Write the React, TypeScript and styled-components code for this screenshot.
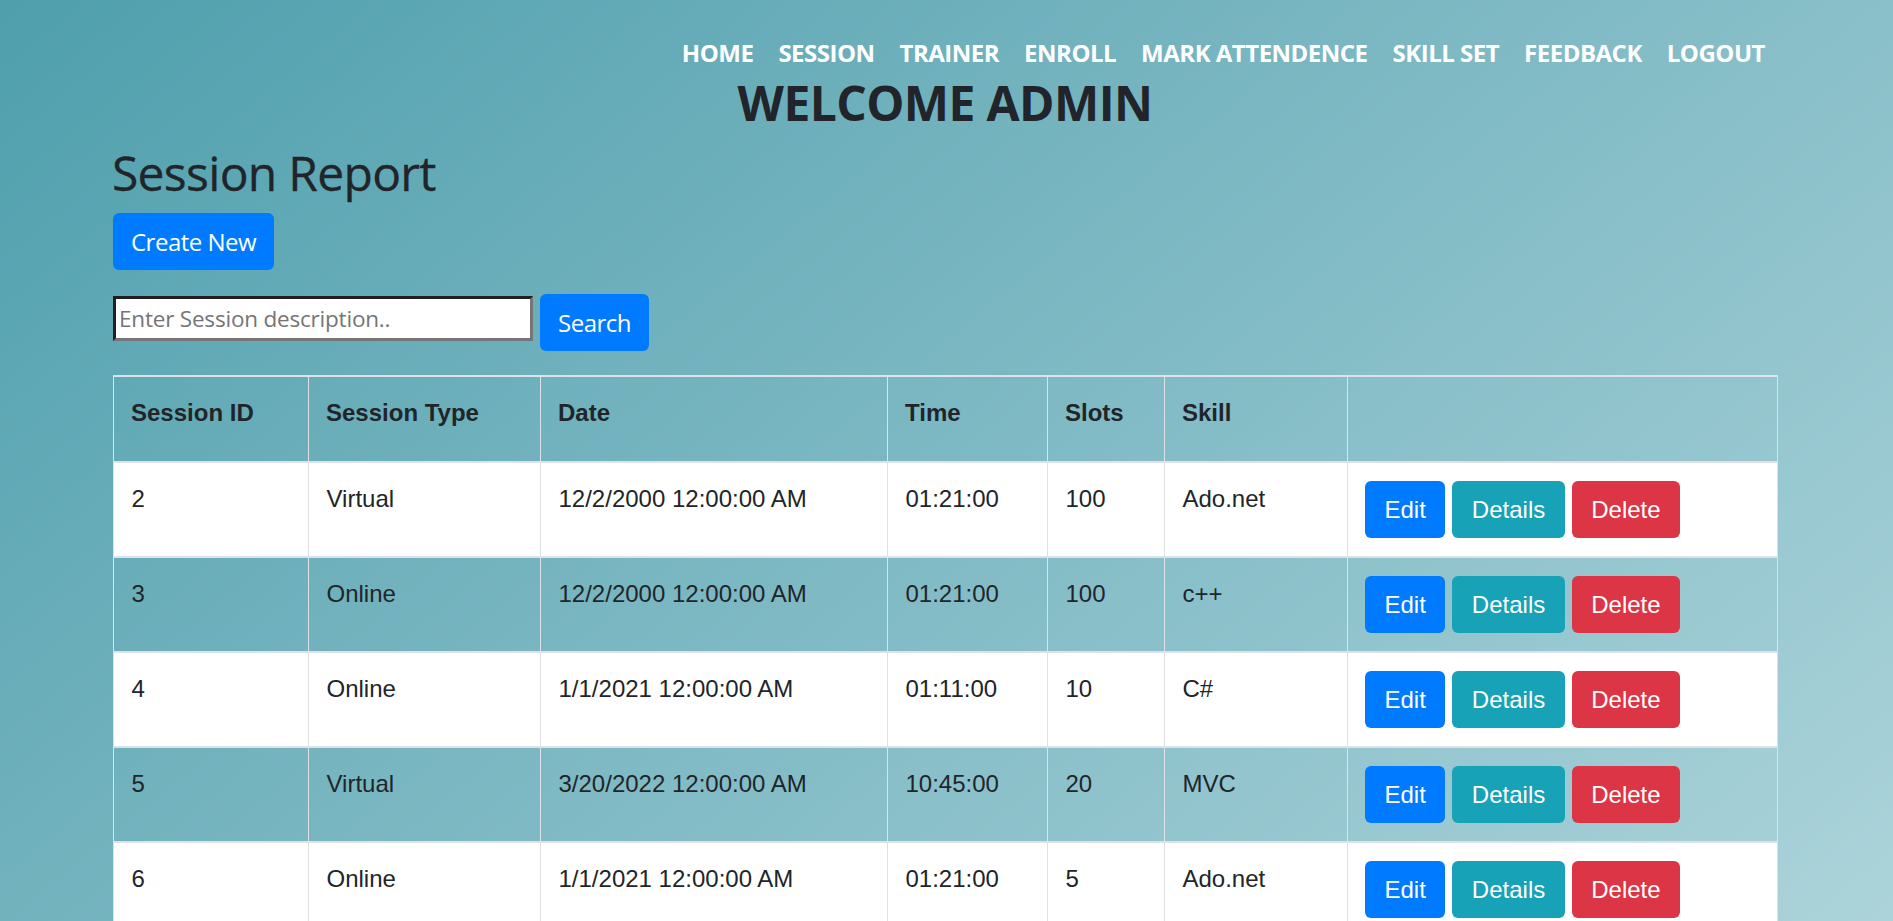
import React from "react";
import styled, { createGlobalStyle, css } from "styled-components";

const GlobalStyle = createGlobalStyle`
  html, body {
    margin: 0;
    padding: 0;
  }
  body {
    min-height: 100vh;
    background: linear-gradient(140.6deg, #4f9fad 0%, #acd3da 100%) fixed;
    font-family: "Open Sans", "Noto Sans", sans-serif;
    color: #212529;
  }
  * { box-sizing: border-box; }
`;

const UI_FONT = `"Open Sans", "Noto Sans", sans-serif`;
const TABLE_FONT = `"Liberation Sans", Arial, sans-serif`;

const NavBar = styled.nav`
  display: flex;
  justify-content: flex-end;
  gap: 25px;
  padding: 35px 128px 0 0;
`;

const NavLink = styled.a`
  font-family: ${UI_FONT};
  font-weight: 700;
  font-size: 24px;
  line-height: 36px;
  color: #ffffff;
  text-decoration: none;
  letter-spacing: -0.5px;
  white-space: nowrap;
`;

const Welcome = styled.h2`
  margin: 3px 0 12px;
  text-align: center;
  font-family: ${UI_FONT};
  font-weight: 700;
  font-size: 48px;
  line-height: 57.6px;
  color: #212529;
  letter-spacing: -0.6px;
  padding-right: 3px;
`;

const Container = styled.main`
  width: 1667px;
  margin: 0 auto;
  padding-right: 3px;
`;

const Heading = styled.h2`
  margin: 0 0 12px -1px;
  font-family: ${UI_FONT};
  font-weight: 500;
  font-size: 48px;
  line-height: 57.6px;
  color: #212529;
  letter-spacing: -0.7px;
  -webkit-text-stroke: 0.3px #212529;
`;

const ActionRow = styled.p`
  margin: 0 0 24px;
  display: flex;
`;

const PrimaryButton = styled.button`
  font-family: ${UI_FONT};
  font-size: 24px;
  line-height: 36px;
  height: 57px;
  padding: 0 18px;
  border: none;
  border-radius: 6px;
  background: #007bff;
  color: #ffffff;
  letter-spacing: -0.5px;
  cursor: pointer;
`;

const SearchForm = styled.form`
  display: flex;
  align-items: flex-start;
  gap: 7px;
  margin: 0 0 24px;
`;

const SearchInput = styled.input`
  width: 420px;
  height: 45px;
  margin-top: 2px;
  padding: 0 3px;
  font-family: ${UI_FONT};
  font-size: 22.5px;
  letter-spacing: -0.2px;
  background: #ffffff;
  border-style: solid;
  border-width: 3px;
  border-color: #1f1f1f #767676 #767676 #1f1f1f;
  outline: none;
  &::placeholder {
    color: #757575;
  }
`;

const Table = styled.table`
  width: 1664px;
  table-layout: fixed;
  border-collapse: collapse;
  font-family: ${TABLE_FONT};
  font-size: 24px;
  line-height: 36px;
  color: #212529;
`;

const HeadCell = styled.th`
  text-align: left;
  vertical-align: top;
  font-weight: 700;
  padding: 18px 18px 30px 17px;
  border: 1px solid #dee2e6;
  border-top-width: 2px;
  border-bottom-width: 2px;
`;

const Row = styled.tr<{ $white: boolean }>`
  ${(p) =>
    p.$white &&
    css`
      background: #ffffff;
    `}
`;

const Cell = styled.td`
  vertical-align: top;
  padding: 18px 18px 18px 17.5px;
  border: 1px solid #dee2e6;
  border-top-width: 2px;
  border-bottom-width: 2px;
  white-space: nowrap;
`;

const ButtonGroup = styled.div`
  display: flex;
  gap: 7px;
  margin-left: -0.5px;
`;

const variants = {
  edit: "#007bff",
  details: "#17a2b8",
  delete: "#dc3545",
};

const ActionButton = styled.a<{ $variant: keyof typeof variants }>`
  display: inline-block;
  height: 57px;
  line-height: 57px;
  padding: 0 19.5px;
  border-radius: 6px;
  font-family: ${TABLE_FONT};
  font-size: 24px;
  color: #ffffff;
  text-decoration: none;
  background: ${(p) => variants[p.$variant]};
`;

const navItems = [
  "HOME",
  "SESSION",
  "TRAINER",
  "ENROLL",
  "MARK ATTENDENCE",
  "SKILL SET",
  "FEEDBACK",
  "LOGOUT",
];

const columns: { label: string; width: number }[] = [
  { label: "Session ID", width: 195 },
  { label: "Session Type", width: 232 },
  { label: "Date", width: 347 },
  { label: "Time", width: 160 },
  { label: "Slots", width: 117 },
  { label: "Skill", width: 183 },
  { label: "", width: 430 },
];

const sessions = [
  { id: 2, type: "Virtual", date: "12/2/2000 12:00:00 AM", time: "01:21:00", slots: 100, skill: "Ado.net" },
  { id: 3, type: "Online", date: "12/2/2000 12:00:00 AM", time: "01:21:00", slots: 100, skill: "c++" },
  { id: 4, type: "Online", date: "1/1/2021 12:00:00 AM", time: "01:11:00", slots: 10, skill: "C#" },
  { id: 5, type: "Virtual", date: "3/20/2022 12:00:00 AM", time: "10:45:00", slots: 20, skill: "MVC" },
  { id: 6, type: "Online", date: "1/1/2021 12:00:00 AM", time: "01:21:00", slots: 5, skill: "Ado.net" },
];

export default function App() {
  return (
    <>
      <GlobalStyle />
      <NavBar>
        {navItems.map((item) => (
          <NavLink key={item} href="#">
            {item}
          </NavLink>
        ))}
      </NavBar>
      <Welcome>WELCOME ADMIN</Welcome>
      <Container>
        <Heading>Session Report</Heading>
        <ActionRow>
          <PrimaryButton type="button">Create New</PrimaryButton>
        </ActionRow>
        <SearchForm onSubmit={(e) => e.preventDefault()}>
          <SearchInput placeholder="Enter Session description.." />
          <PrimaryButton type="submit">Search</PrimaryButton>
        </SearchForm>
        <Table>
          <colgroup>
            {columns.map((c, i) => (
              <col key={i} style={{ width: c.width }} />
            ))}
          </colgroup>
          <thead>
            <tr>
              {columns.map((c, i) => (
                <HeadCell key={i}>{c.label}</HeadCell>
              ))}
            </tr>
          </thead>
          <tbody>
            {sessions.map((s, i) => (
              <Row key={s.id} $white={i % 2 === 0}>
                <Cell>{s.id}</Cell>
                <Cell>{s.type}</Cell>
                <Cell>{s.date}</Cell>
                <Cell>{s.time}</Cell>
                <Cell>{s.slots}</Cell>
                <Cell>{s.skill}</Cell>
                <Cell>
                  <ButtonGroup>
                    <ActionButton $variant="edit" href="#">Edit</ActionButton>
                    <ActionButton $variant="details" href="#">Details</ActionButton>
                    <ActionButton $variant="delete" href="#">Delete</ActionButton>
                  </ButtonGroup>
                </Cell>
              </Row>
            ))}
          </tbody>
        </Table>
      </Container>
    </>
  );
}
